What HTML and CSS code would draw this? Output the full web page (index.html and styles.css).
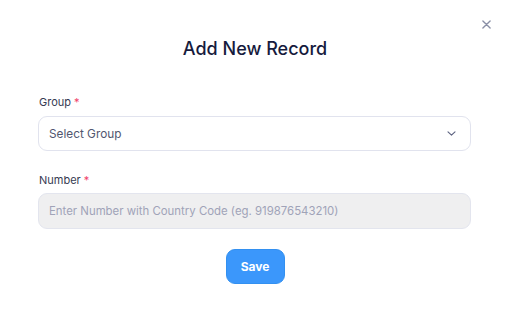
FILE: index.html
```html
<!DOCTYPE html>
<html>
<head>
<meta charset="utf-8">
<link rel="stylesheet" href="styles.css">
</head>
<body>
<div class="modal">
  <button class="close" aria-label="Close">
    <svg width="9" height="9" viewBox="0 0 10 10"><path d="M1 1L9 9M9 1L1 9" stroke="#8a8fa6" stroke-width="1.5" stroke-linecap="round"/></svg>
  </button>
  <h1 class="title">Add New Record</h1>
  <form class="form">
    <div class="field">
      <label class="label">Group <span class="req">*</span></label>
      <div class="select">
        <span class="select-text">Select Group</span>
        <svg width="9" height="5" viewBox="0 0 9 5"><path d="M1 0.8L4.5 4.2L8 0.8" fill="none" stroke="#5c6280" stroke-width="1.1" stroke-linecap="round" stroke-linejoin="round"/></svg>
      </div>
    </div>
    <div class="field">
      <label class="label">Number <span class="req">*</span></label>
      <input class="input" type="text" placeholder="Enter Number with Country Code (eg. 919876543210)" disabled>
    </div>
    <div class="actions">
      <button type="button" class="save">Save</button>
    </div>
  </form>
</div>
</body>
</html>
```
FILE: styles.css
```css
* { box-sizing: border-box; }
html, body { margin: 0; padding: 0; background: #fff; }
body { font-family: Inter, "Noto Sans", sans-serif; width: 512px; height: 320px; overflow: hidden; }
.modal { position: relative; padding: 36px 41px 0 38px; }
.close { position: absolute; top: 20px; right: 21px; width: 9px; height: 9px; padding: 0; border: 0; background: none; display: flex; }
.title { margin: 0; text-align: center; font-size: 18px; font-weight: 500; color: #161b3d; line-height: 26px; padding-left: 1px; }
.form { margin-top: 33px; display: flex; flex-direction: column; }
.field { display: flex; flex-direction: column; margin-bottom: 22px; }
.field + .field { margin-bottom: 20px; }
.label { font-size: 11px; color: #363a52; line-height: 14px; margin-left: 1px; margin-bottom: 7px; }
.field + .field .label { margin-bottom: 6px; }
.req { color: #f0426a; }
.select { height: 35px; border: 1px solid #e1e3ee; border-radius: 9px; display: flex; align-items: center; justify-content: space-between; padding: 0 14px 0 10px; }
.select-text { font-size: 11.8px; color: #51566f; }
.input { height: 36px; border: 1px solid #e3e5ee; border-radius: 9px; background: #efeff0; padding: 0 10px; font-family: inherit; font-size: 11.4px; outline: none; }
.input::placeholder { color: #a0a3b8; }
.actions { display: flex; justify-content: center; padding-left: 1px; }
.save { width: 59px; height: 35px; border: 1px solid #3390f0; border-radius: 9px; background: #3b97fb; color: #fff; font-family: inherit; font-size: 12px; font-weight: 700; }
```
